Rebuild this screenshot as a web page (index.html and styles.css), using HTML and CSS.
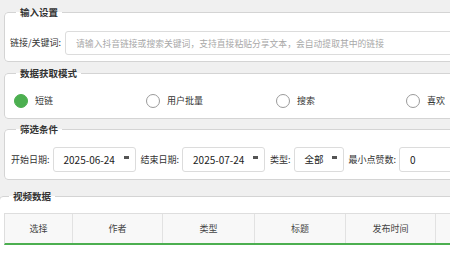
FILE: index.html
```html
<!DOCTYPE html>
<html lang="zh-CN">
<head>
<meta charset="utf-8">
<title>抖音数据采集</title>
<link rel="stylesheet" href="styles.css">
</head>
<body>
<div class="page">
  <fieldset class="group g-input">
    <legend class="legend">输入设置</legend>
    <div class="row">
      <label class="label">链接/关键词:</label>
      <input class="text-input" type="text" placeholder="请输入抖音链接或搜索关键词，支持直接粘贴分享文本，会自动提取其中的链接">
    </div>
  </fieldset>

  <fieldset class="group g-mode">
    <legend class="legend">数据获取模式</legend>
    <div class="radios">
      <div class="radio checked"><span class="dot"></span><span class="rlabel">短链</span></div>
      <div class="radio"><span class="dot"></span><span class="rlabel">用户批量</span></div>
      <div class="radio"><span class="dot"></span><span class="rlabel">搜索</span></div>
      <div class="radio"><span class="dot"></span><span class="rlabel">喜欢</span></div>
    </div>
  </fieldset>

  <fieldset class="group g-filter">
    <legend class="legend">筛选条件</legend>
    <div class="filters">
      <span class="label">开始日期:</span>
      <div class="field date"><span class="val">2025-06-24</span><span class="caret"></span></div>
      <span class="label">结束日期:</span>
      <div class="field date"><span class="val">2025-07-24</span><span class="caret"></span></div>
      <span class="label">类型:</span>
      <div class="field select"><span class="val cjk">全部</span><span class="caret"></span></div>
      <span class="label">最小点赞数:</span>
      <div class="field number"><span class="val">0</span></div>
    </div>
  </fieldset>

  <fieldset class="group g-data">
    <legend class="legend">视频数据</legend>
    <div class="table">
      <div class="th c1">选择</div>
      <div class="th c2">作者</div>
      <div class="th c3">类型</div>
      <div class="th c4">标题</div>
      <div class="th c5">发布时间</div>
      <div class="th c6"></div>
    </div>
  </fieldset>
</div>
</body>
</html>
```
FILE: styles.css
```css
html, body {
  margin: 0;
  padding: 0;
}
body {
  width: 450px;
  height: 255px;
  overflow: hidden;
  background: #f0f0f0;
  font-family: "Noto Sans CJK SC", "Noto Sans", sans-serif;
  color: #333;
}
.page {
  padding: 6px 0 0 4px;
}
.group {
  margin: 0;
  padding: 0;
  width: 480px;
  box-sizing: border-box;
  border: 1px solid #d4d4d4;
  border-radius: 4px;
  background: #fff;
}
.legend {
  margin-left: 11px;
  padding: 0 4px;
  font-size: 9.5px;
  line-height: 13px;
  font-weight: 700;
  color: #333;
}
.label {
  font-size: 9px;
  line-height: 12px;
  color: #333;
  white-space: nowrap;
}

/* group 1 */
.g-input .row {
  display: flex;
  align-items: center;
  gap: 4px;
  padding: 12px 0 6px 5px;
}
.text-input {
  flex: 1;
  height: 24px;
  box-sizing: border-box;
  border: 1px solid #dcdcdc;
  border-radius: 3px;
  padding: 0 10px;
  font-family: inherit;
  font-size: 8.8px;
  color: #333;
  background: #fff;
  outline: none;
}
.text-input::placeholder {
  color: #a8a8a8;
}

/* group 2 */
.g-mode {
  margin-top: 5px;
}
.radios {
  display: grid;
  grid-template-columns: 132px 130px 130px 130px;
  padding: 9px 0 5px 9px;
}
.radio {
  display: flex;
  align-items: center;
  height: 24px;
  gap: 7px;
}
.dot {
  width: 14px;
  height: 14px;
  box-sizing: border-box;
  border-radius: 50%;
  border: 1px solid #9a9a9a;
  background: #fff;
}
.radio.checked .dot {
  border-color: #4caf50;
  background: #4caf50;
}
.rlabel {
  font-size: 9px;
  line-height: 12px;
  color: #333;
}

/* group 3 */
.g-filter {
  margin-top: 4px;
}
.filters {
  display: flex;
  align-items: center;
  padding: 11px 0 7px 6px;
}
.field {
  display: flex;
  align-items: flex-start;
  justify-content: space-between;
  height: 25px;
  box-sizing: border-box;
  border: 1px solid #dcdcdc;
  border-radius: 3px;
  background: #fff;
  padding: 0 6px 0 10px;
  margin: 0 5px 0 3px;
}
.val {
  font-size: 10px;
  line-height: 23px;
  color: #222;
}
.val.cjk {
  font-size: 9.5px;
}
.caret {
  width: 5px;
  height: 3px;
  margin-top: 8px;
  background: #555;
}
.date {
  width: 83px;
}
.select {
  width: 50px;
}
.number {
  flex: 1;
  margin-right: 0;
}

/* group 4 */
.g-data {
  margin-top: 10px;
  margin-left: -5px;
  width: 490px;
  height: 80px;
}
.g-data .legend {
  margin-left: 9px;
}
.table {
  display: flex;
  margin: 10px 0 0 4px;
  border-top: 1px solid #dedede;
  border-left: 1px solid #dedede;
  border-bottom: 2px solid #4caf50;
  background: #f8f8f8;
}
.th {
  height: 29px;
  box-sizing: border-box;
  border-right: 1px solid #e2e2e2;
  display: flex;
  align-items: center;
  justify-content: center;
  font-size: 9px;
  color: #444;
}
.c1 { width: 68px; }
.c2 { width: 90px; }
.c3 { width: 92px; }
.c4 { width: 91px; }
.c5 { width: 90px; }
.c6 { flex: 1; border-right: none; }
```
